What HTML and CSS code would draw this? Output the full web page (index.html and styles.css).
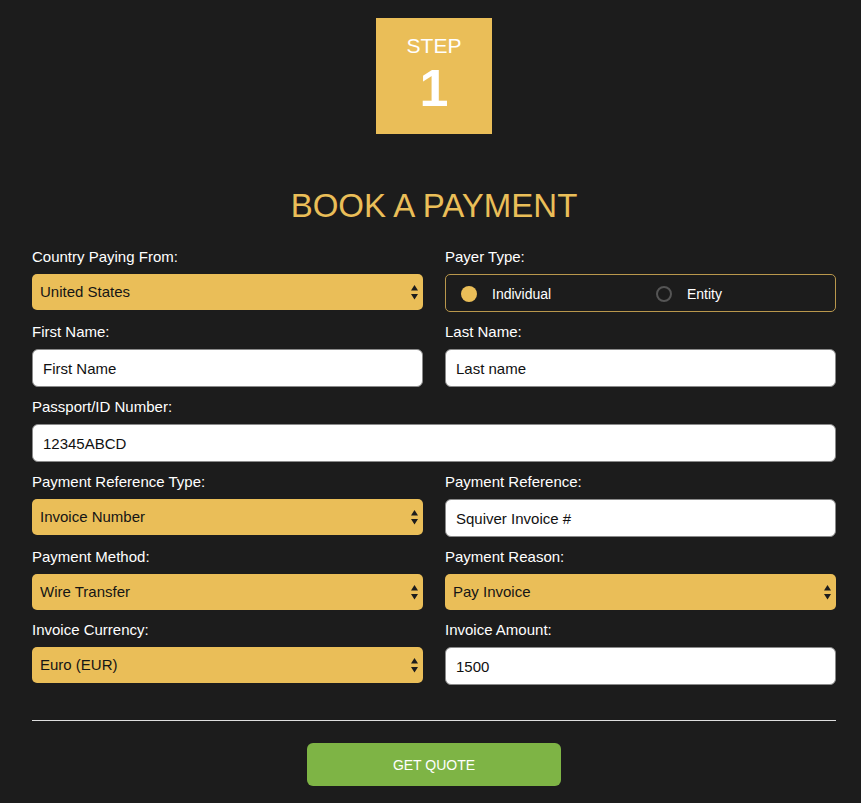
FILE: index.html
```html
<!DOCTYPE html>
<html lang="en">
<head>
<meta charset="utf-8">
<title>Book a Payment</title>
<link rel="stylesheet" href="styles.css">
</head>
<body>
<div class="page">
  <div class="step">
    <div class="step-label">STEP</div>
    <div class="step-num">1</div>
  </div>
  <h1 class="title">BOOK A PAYMENT</h1>
  <form class="form">
    <div class="field">
      <label class="label">Country Paying From:</label>
      <div class="select-wrap">
        <select class="select"><option>United States</option></select>
        <svg class="arrows" width="7" height="15" viewBox="0 0 7 15"><path d="M3.5 0 L7 5.5 L0 5.5 Z M0 9 L7 9 L3.5 14.5 Z" fill="#1d1d1d"/></svg>
      </div>
    </div>
    <div class="field">
      <label class="label">Payer Type:</label>
      <div class="radio-box">
        <span class="radio-opt first"><span class="radio on"></span>Individual</span>
        <span class="radio-opt"><span class="radio"></span>Entity</span>
      </div>
    </div>
    <div class="field">
      <label class="label">First Name:</label>
      <input class="input" type="text" value="First Name">
    </div>
    <div class="field">
      <label class="label">Last Name:</label>
      <input class="input" type="text" value="Last name">
    </div>
    <div class="field wide">
      <label class="label">Passport/ID Number:</label>
      <input class="input" type="text" value="12345ABCD">
    </div>
    <div class="field">
      <label class="label">Payment Reference Type:</label>
      <div class="select-wrap">
        <select class="select"><option>Invoice Number</option></select>
        <svg class="arrows" width="7" height="15" viewBox="0 0 7 15"><path d="M3.5 0 L7 5.5 L0 5.5 Z M0 9 L7 9 L3.5 14.5 Z" fill="#1d1d1d"/></svg>
      </div>
    </div>
    <div class="field">
      <label class="label">Payment Reference:</label>
      <input class="input" type="text" value="Squiver Invoice #">
    </div>
    <div class="field">
      <label class="label">Payment Method:</label>
      <div class="select-wrap">
        <select class="select"><option>Wire Transfer</option></select>
        <svg class="arrows" width="7" height="15" viewBox="0 0 7 15"><path d="M3.5 0 L7 5.5 L0 5.5 Z M0 9 L7 9 L3.5 14.5 Z" fill="#1d1d1d"/></svg>
      </div>
    </div>
    <div class="field">
      <label class="label">Payment Reason:</label>
      <div class="select-wrap">
        <select class="select"><option>Pay Invoice</option></select>
        <svg class="arrows" width="7" height="15" viewBox="0 0 7 15"><path d="M3.5 0 L7 5.5 L0 5.5 Z M0 9 L7 9 L3.5 14.5 Z" fill="#1d1d1d"/></svg>
      </div>
    </div>
    <div class="field">
      <label class="label">Invoice Currency:</label>
      <div class="select-wrap">
        <select class="select"><option>Euro (EUR)</option></select>
        <svg class="arrows" width="7" height="15" viewBox="0 0 7 15"><path d="M3.5 0 L7 5.5 L0 5.5 Z M0 9 L7 9 L3.5 14.5 Z" fill="#1d1d1d"/></svg>
      </div>
    </div>
    <div class="field">
      <label class="label">Invoice Amount:</label>
      <input class="input" type="text" value="1500">
    </div>
  </form>
  <hr class="rule">
  <div class="actions">
    <button class="btn" type="button">GET QUOTE</button>
  </div>
</div>
</body>
</html>
```
FILE: styles.css
```css
* { box-sizing: border-box; }

html, body {
  margin: 0;
  padding: 0;
  background: #1c1c1c;
}

body {
  font-family: "Liberation Sans", Arial, Helvetica, sans-serif;
  color: #ffffff;
}

.page {
  width: 804px;
  margin-left: 32px;
  padding-top: 18px;
  padding-bottom: 16px;
}

.step {
  width: 116px;
  height: 116px;
  margin: 0 auto;
  background: #eabe58;
  display: flex;
  flex-direction: column;
  align-items: center;
  padding-top: 16px;
}

.step-label {
  font-size: 21px;
  line-height: 24px;
  color: #ffffff;
}

.step-num {
  font-size: 52px;
  line-height: 52px;
  font-weight: bold;
  color: #ffffff;
  margin-top: 4px;
}

.title {
  margin: 52px 0 22px;
  font-size: 33px;
  line-height: 40px;
  font-weight: normal;
  text-align: center;
  color: #eabe58;
}

.form {
  display: grid;
  grid-template-columns: 391px 391px;
  column-gap: 22px;
  row-gap: 11px;
  align-items: start;
}

.field.wide {
  grid-column: 1 / 3;
}

.label {
  display: block;
  font-size: 15px;
  line-height: 18px;
  margin-bottom: 8px;
  color: #ffffff;
}

.select-wrap {
  position: relative;
}

.select {
  appearance: none;
  -webkit-appearance: none;
  display: block;
  width: 100%;
  height: 36px;
  margin: 0;
  border: none;
  border-radius: 5px;
  background: #eabe58;
  color: #151515;
  font-family: "Liberation Sans", Arial, Helvetica, sans-serif;
  font-size: 15px;
  padding: 0 24px 2px 8px;
  outline: none;
}

.arrows {
  position: absolute;
  right: 5px;
  top: 11px;
  pointer-events: none;
}

.input {
  display: block;
  width: 100%;
  height: 38px;
  margin: 0;
  border: 1px solid #8a8a8a;
  border-radius: 6px;
  background: #ffffff;
  color: #111111;
  font-family: "Liberation Sans", Arial, Helvetica, sans-serif;
  font-size: 15px;
  padding: 0 10px;
  outline: none;
}

.radio-box {
  height: 38px;
  border: 1px solid #b9974c;
  border-radius: 5px;
  display: flex;
  align-items: center;
  padding-left: 15px;
  padding-top: 1px;
}

.radio-opt {
  display: flex;
  align-items: center;
  flex: 1 1 auto;
  font-size: 14px;
  color: #ffffff;
}

.radio-opt.first {
  flex: 0 0 195px;
}

.radio {
  width: 16px;
  height: 16px;
  border-radius: 50%;
  border: 2px solid #555555;
  margin-right: 15px;
  flex: none;
}

.radio.on {
  border: none;
  background: #eabe58;
}

.rule {
  margin: 35px 0 0;
  border: none;
  border-top: 1px solid #dedede;
  height: 0;
}

.actions {
  display: flex;
  justify-content: center;
  padding-top: 22px;
}

.btn {
  width: 254px;
  height: 43px;
  border: none;
  border-radius: 6px;
  background: #7eb445;
  color: #ffffff;
  font-family: "Liberation Sans", Arial, Helvetica, sans-serif;
  font-size: 14px;
  cursor: pointer;
}
```
